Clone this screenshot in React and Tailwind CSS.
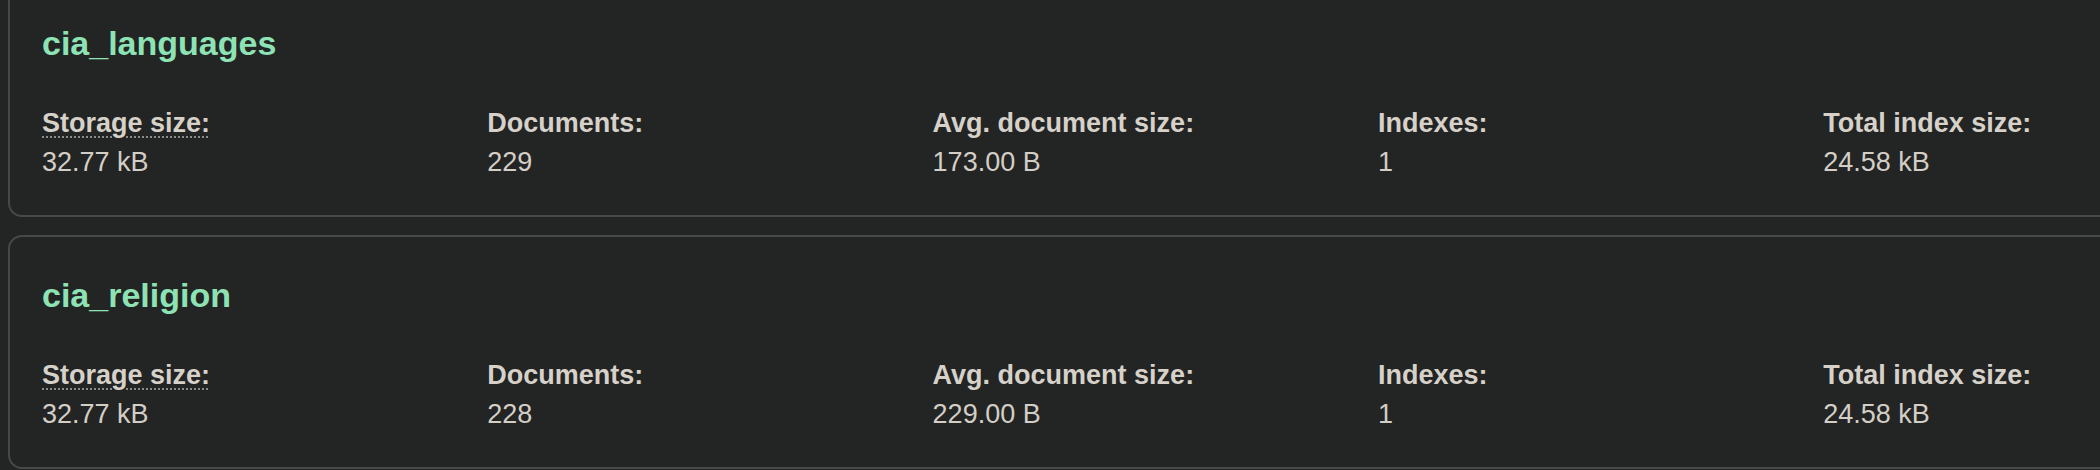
const collections = [
  {
    name: "cia_languages",
    stats: [
      { label: "Storage size:", value: "32.77 kB", hint: true },
      { label: "Documents:", value: "229" },
      { label: "Avg. document size:", value: "173.00 B" },
      { label: "Indexes:", value: "1" },
      { label: "Total index size:", value: "24.58 kB" },
    ],
  },
  {
    name: "cia_religion",
    stats: [
      { label: "Storage size:", value: "32.77 kB", hint: true },
      { label: "Documents:", value: "228" },
      { label: "Avg. document size:", value: "229.00 B" },
      { label: "Indexes:", value: "1" },
      { label: "Total index size:", value: "24.58 kB" },
    ],
  },
];

const CollectionCard = ({ name, stats }) => {
  return (
    <div className="w-[2320px] shrink-0 rounded-[14px] border-2 border-[#474848] pl-[32px] pt-[38px] pb-[33px]">
      <h2 className="text-[34px] leading-[40px] font-semibold text-[#8ee3b5]">{name}</h2>

      {/* stats */}
      <div className="mt-[41px] grid grid-cols-[repeat(5,445.3px)]">
        {stats.map((s) => (
          <div key={s.label} className="flex flex-col">
            <span className="text-[27px] leading-[39px] font-semibold text-[#d6d1c9]">
              <span
                className={
                  s.hint
                    ? "underline decoration-dotted decoration-[#8d8a85] decoration-2 underline-offset-[4px]"
                    : ""
                }
              >
                {s.label}
              </span>
            </span>
            <span className="text-[27px] leading-[39px] text-[#d3cec6]">{s.value}</span>
          </div>
        ))}
      </div>
    </div>
  );
};

const App = () => {
  return (
    <div
      className="w-[2100px] h-[470px] overflow-hidden bg-[#232424]"
      style={{ fontFamily: '"Liberation Sans", Arial, sans-serif' }}
    >
      <div className="-mt-[17px] pl-[8px] flex flex-col gap-[18px]">
        {collections.map((c) => (
          <CollectionCard key={c.name} name={c.name} stats={c.stats} />
        ))}
      </div>
    </div>
  );
};

export default App;
